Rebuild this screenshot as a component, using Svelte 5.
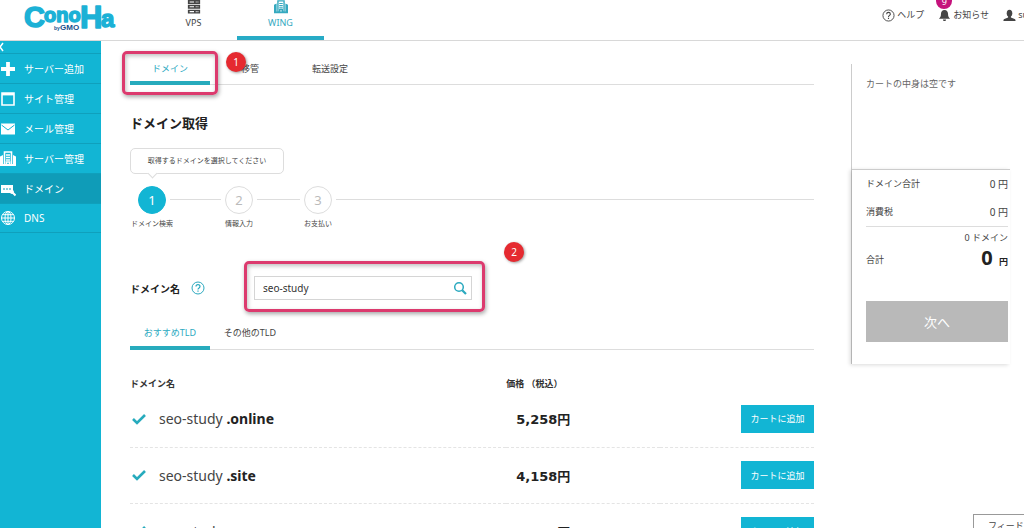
<script>
  let keyword = $state('seo-study')
  let activeTab = $state('ドメイン')
  let activeTld = $state('おすすめTLD')

  const menu = [
    { icon: 'plus', label: 'サーバー追加' },
    { icon: 'site', label: 'サイト管理' },
    { icon: 'mail', label: 'メール管理' },
    { icon: 'server', label: 'サーバー管理' },
    { icon: 'domain', label: 'ドメイン', active: true },
    { icon: 'globe', label: 'DNS' },
  ]

  const tabs = ['ドメイン', '移管', '転送設定']
  const tldTabs = ['おすすめTLD', 'その他のTLD']

  const domains = [
    { tld: '.online', price: '5,258' },
    { tld: '.site', price: '4,158' },
    { tld: '.space', price: '3,278' },
  ]
</script>

{#snippet building()}
  <path d="M4.500 1h7v13h-2v-3h-3v3h-2z" fill="none" stroke="currentColor" stroke-width="1.600" />
  <path d="M6 4h4M6 6.500h4M6 9h4" stroke="currentColor" stroke-width="1.400" />
  <path d="M0 5.500 3 4v11H0zM13 4l3 1.500V15h-3zM2 13h12v2H2z" fill="currentColor" />
{/snippet}

<div class="page">
  <header class="header">
    <a href="/" class="logo" aria-label="ConoHa by GMO">
      <svg viewBox="0 0 94 34">
        <g class="logo-name">
          <text x="0" y="25" font-size="29">C</text>
          <text x="20" y="20" font-size="20">ono</text>
          <text x="56" y="26" font-size="31">H</text>
          <text x="77" y="25" font-size="24">a</text>
        </g>
        <text class="logo-by" x="30" y="28" font-size="5">by</text>
        <text class="logo-gmo" x="36" y="28" font-size="8">GMO</text>
      </svg>
    </a>
    <nav class="products">
      <a href="/vps" class="product">
        <svg viewBox="0 0 14 16">
          <path d="M0 0h14v4.500H0zM0 5.500h14V10H0zM0 11h14v4.500H0z" fill="currentColor" />
          <path d="M2 2.300h5M9 2.300h1M11 2.300h1M2 7.800h5M9 7.800h1M11 7.800h1M2 13.300h5M9 13.300h1M11 13.300h1" stroke="#fff" stroke-width="1.200" />
        </svg>
        VPS
      </a>
      <a href="/wing" class="product active">
        <svg viewBox="0 0 16 16">{@render building()}</svg>
        WING
      </a>
    </nav>
    <div class="account">
      <a href="/help">
        <svg viewBox="0 0 14 14" fill="none" stroke="currentColor">
          <circle cx="7" cy="7" r="6" />
          <path d="M5 5.600c0-2.600 4-2.600 4 0C9 7 7 6.800 7 8.500M7 9.500v1.300" stroke-width="1.200" />
        </svg>
        ヘルプ
      </a>
      <a href="/news" class="news">
        <svg viewBox="0 0 14 14" fill="currentColor">
          <path d="M7 1c-2.600 0-3.800 2-3.800 4.200 0 2.800-.7 3.900-2.200 5.300h12c-1.500-1.400-2.200-2.500-2.200-5.300C10.800 3 9.600 1 7 1zM5.300 11.300h3.400c0 2.200-3.400 2.200-3.400 0z" />
        </svg>
        <span class="count">9</span>
        お知らせ
      </a>
      <a href="/account">
        <svg viewBox="0 0 14 14" fill="currentColor">
          <ellipse cx="7" cy="4.500" rx="3" ry="3.800" />
          <path d="M5.500 7h3v2.200l4 1.500c.8.300 1 .9 1 2.300H.5c0-1.400.2-2 1-2.300l4-1.500z" />
        </svg>
        su
      </a>
    </div>
  </header>

  <div class="body">
    <nav class="sidebar">
      <button class="collapse" aria-label="閉じる">
        <svg viewBox="0 0 6 10"><path d="M3 1 0 5l3 4" fill="none" stroke="currentColor" stroke-width="1.500" /></svg>
      </button>
      {#each menu as item}
        <a href="/" class="menu-item" class:active={item.active}>
          <svg viewBox="0 0 16 16">
            {#if item.icon === 'plus'}
              <path d="M8 1v14M1 8h14" stroke="currentColor" stroke-width="3.800" />
            {:else if item.icon === 'site'}
              <path d="M2 2h12v12H2z" fill="none" stroke="currentColor" stroke-width="1.600" />
              <path d="M2 3.200h12" stroke="currentColor" stroke-width="2.400" />
            {:else if item.icon === 'mail'}
              <path d="M1 2.500h14v11H1z" fill="currentColor" />
              <path d="m1.500 4 6.500 5 6.500-5" fill="none" stroke="#12b5d4" />
            {:else if item.icon === 'server'}
              {@render building()}
            {:else if item.icon === 'domain'}
              <path d="M1 4h12v8H1z" fill="currentColor" />
              <path d="M3 8h8" stroke="#0f9cb8" stroke-dasharray="2 1" />
              <circle cx="12" cy="11" r="2" fill="currentColor" />
              <path d="m12 11 3.500 3.500" stroke="currentColor" stroke-width="2" />
            {:else}
              <g fill="none" stroke="currentColor">
                <circle cx="8" cy="8" r="6.500" />
                <ellipse cx="8" cy="8" rx="3" ry="6.500" />
                <path d="M8 1.500v13M1.500 8h13M2.500 4.700h11M2.500 11.300h11" />
              </g>
            {/if}
          </svg>
          {item.label}
        </a>
      {/each}
    </nav>

    <main class="main">
      <div class="tabs">
        {#each tabs as tab}
          <button class="tab" class:active={activeTab === tab} onclick={() => (activeTab = tab)}>{tab}</button>
        {/each}
        <div class="frame frame-tab"></div>
        <span class="marker marker-tab">1</span>
      </div>

      <h1>ドメイン取得</h1>

      <p class="balloon">取得するドメインを選択してください</p>
      <div class="steps">
        <div class="step active"><span class="circle">1</span><span class="step-label">ドメイン検索</span></div>
        <div class="line"></div>
        <div class="step"><span class="circle">2</span><span class="step-label">情報入力</span></div>
        <div class="line"></div>
        <div class="step"><span class="circle">3</span><span class="step-label">お支払い</span></div>
        <div class="line"></div>
      </div>

      <form class="search" onsubmit={(e) => e.preventDefault()}>
        <label for="keyword">ドメイン名</label>
        <svg class="hint" viewBox="0 0 14 14" fill="none" stroke="currentColor">
          <circle cx="7" cy="7" r="6" />
          <path d="M5 5.600c0-2.600 4-2.600 4 0C9 7 7 6.800 7 8.500M7 9.500v1.300" stroke-width="1.200" />
        </svg>
        <div class="field">
          <input id="keyword" type="text" bind:value={keyword} />
          <button class="search-btn" aria-label="検索">
            <svg viewBox="0 0 14 14" fill="none" stroke="currentColor">
              <circle cx="6" cy="6" r="4.300" stroke-width="1.500" />
              <path d="m9.200 9.200 3.800 3.800" stroke-width="2.200" />
            </svg>
          </button>
          <div class="frame frame-field"></div>
          <span class="marker marker-field">2</span>
        </div>
      </form>

      <div class="tabs tld-tabs">
        {#each tldTabs as tab}
          <button class="tab" class:active={activeTld === tab} onclick={() => (activeTld = tab)}>{tab}</button>
        {/each}
      </div>

      <table class="domains">
        <thead>
          <tr>
            <th class="col-name">ドメイン名</th>
            <th>価格 （税込）</th>
            <th></th>
          </tr>
        </thead>
        <tbody>
          {#each domains as domain}
            <tr>
              <td>
                <div class="name">
                  <svg viewBox="0 0 14 12"><path d="m1 6 4 4 8-8" fill="none" stroke="currentColor" stroke-width="2.600" /></svg>
                  <span>seo-study <b>{domain.tld}</b></span>
                </div>
              </td>
              <td class="price">{domain.price}円</td>
              <td class="action"><button class="add-btn">カートに追加</button></td>
            </tr>
          {/each}
        </tbody>
      </table>
    </main>

    <aside class="cart">
      <p class="empty">カートの中身は空です</p>
      <div class="summary">
        <div class="row"><span>ドメイン合計</span><span class="value">0 円</span></div>
        <div class="row"><span>消費税</span><span class="value">0 円</span></div>
        <div class="total">
          <p class="quantity">0 ドメイン</p>
          <div class="sum"><span>合計</span><strong><span class="amount">0</span> 円</strong></div>
        </div>
        <button class="next-btn">次へ</button>
      </div>
    </aside>
  </div>

  <button class="feedback">フィード</button>
</div>

<style>
  :global(body) {
    background: #fff;
  }

  .page {
    position: relative;
    display: flex;
    flex-direction: column;
    height: 100vh;
    overflow: hidden;
    font-family: "Noto Sans", "Noto Sans CJK JP", sans-serif;
    font-size: 9px;
    color: #444;
  }

  .page * {
    box-sizing: border-box;
  }

  a {
    color: inherit;
    text-decoration: none;
  }

  button {
    padding: 0;
    border: none;
    background: none;
    font: inherit;
    color: inherit;
    cursor: pointer;
  }

  p,
  h1 {
    margin: 0;
  }

  .header {
    display: flex;
    flex-shrink: 0;
    height: 41px;
    border-bottom: 1px solid #d8d8d8;
  }

  .logo {
    width: 150px;
    padding: 2px 0 0 24px;
  }

  .logo svg {
    display: block;
    width: 94px;
    height: 34px;
    overflow: visible;
  }

  .logo-name {
    font-family: "Liberation Sans", sans-serif;
    font-weight: 700;
    fill: #1cb1d6;
    stroke: #1cb1d6;
    stroke-width: 1.5px;
    stroke-linejoin: round;
  }

  .logo-by,
  .logo-gmo {
    font-family: "Liberation Sans", sans-serif;
    font-weight: 700;
    fill: #164f8c;
  }

  .products {
    display: flex;
  }

  .product {
    display: flex;
    flex-direction: column;
    align-items: center;
    gap: 2px;
    width: 87px;
    height: 40px;
    line-height: 14px;
    border-bottom: 4px solid transparent;
  }

  .product.active {
    color: #35a9bf;
    border-bottom-color: #27abc6;
  }

  .product svg {
    width: 14px;
    height: 14px;
  }

  .account {
    display: flex;
    gap: 14px;
    margin-right: -4px;
    margin-left: auto;
    line-height: 30px;
    white-space: nowrap;
  }

  .account a {
    display: flex;
    align-items: center;
    gap: 2px;
    height: 30px;
  }

  .account svg {
    width: 13px;
    height: 13px;
  }

  .news {
    position: relative;
  }

  .count {
    position: absolute;
    top: -7px;
    left: -2px;
    width: 16px;
    height: 16px;
    border-radius: 50%;
    background: #c5127c;
    color: #fff;
    line-height: 18px;
    text-align: center;
  }

  .body {
    display: flex;
    flex: 1;
    min-height: 0;
  }

  .sidebar {
    flex: 0 0 101px;
    background: #12b5d4;
    color: #fff;
  }

  .collapse {
    display: flex;
    align-items: center;
    width: 100%;
    height: 12px;
  }

  .collapse svg {
    width: 6px;
    height: 10px;
  }

  .menu-item {
    display: flex;
    align-items: center;
    gap: 8px;
    height: 30px;
    border-top: 1px solid #0fa0bc;
    font-size: 10px;
  }

  .menu-item:last-child {
    border-bottom: 1px solid #0fa0bc;
  }

  .menu-item.active {
    background: #0f9cb8;
  }

  .menu-item svg {
    width: 16px;
    height: 16px;
  }

  .main {
    flex: 1;
    padding: 14px 37px 0 29px;
  }

  .tabs {
    position: relative;
    display: flex;
    height: 30px;
    border-bottom: 1px solid #ddd;
  }

  .tab {
    width: 80px;
    height: 30px;
    border-bottom: 4px solid transparent;
  }

  .tab.active {
    color: #2ba9bf;
    border-bottom-color: #27abbd;
  }

  .frame {
    position: absolute;
    border: 3px solid #dc3a6e;
    border-radius: 5px;
    box-shadow: 1px 2px 4px rgba(0, 0, 0, 0.35), inset 1px 2px 4px rgba(0, 0, 0, 0.25);
    pointer-events: none;
  }

  .frame-tab {
    top: -4px;
    left: -8px;
    width: 96px;
    height: 44px;
  }

  .marker {
    position: absolute;
    width: 20px;
    height: 20px;
    border-radius: 50%;
    background: #e52a30;
    box-shadow: 1px 1px 3px rgba(0, 0, 0, 0.4);
    color: #fff;
    font-size: 10px;
    line-height: 20px;
    text-align: center;
  }

  .marker-tab {
    top: -3px;
    left: 96px;
  }

  h1 {
    margin-top: 28px;
    font-size: 13px;
    line-height: 20px;
    color: #222;
  }

  .balloon {
    position: relative;
    width: 154px;
    height: 26px;
    margin-top: 15px;
    border: 1px solid #ddd;
    border-radius: 5px;
    font-size: 7px;
    line-height: 24px;
    text-align: center;
  }

  .balloon::after {
    content: "";
    position: absolute;
    bottom: -4px;
    left: 18px;
    width: 6px;
    height: 6px;
    border: solid #ddd;
    border-width: 0 1px 1px 0;
    background: #fff;
    transform: rotate(45deg);
  }

  .steps {
    display: grid;
    grid-template-columns: 28px 51px 28px 43px 28px 1fr;
    gap: 4px;
    margin-top: 12px;
    padding-left: 8px;
  }

  .step {
    display: flex;
    flex-direction: column;
    align-items: center;
    gap: 4px;
  }

  .circle {
    width: 28px;
    height: 28px;
    border: 1px solid #ddd;
    border-radius: 50%;
    font-size: 13px;
    line-height: 26px;
    text-align: center;
    color: #bbb;
  }

  .step.active .circle {
    border-color: #12b5d4;
    background: #12b5d4;
    color: #fff;
  }

  .step-label {
    font-size: 7px;
    line-height: 12px;
    white-space: nowrap;
  }

  .line {
    height: 14px;
    border-bottom: 1px solid #ddd;
  }

  .search {
    display: flex;
    align-items: center;
    margin-top: 46px;
  }

  .search label {
    width: 61px;
    font-size: 10px;
    font-weight: 700;
    color: #222;
  }

  .hint {
    width: 14px;
    height: 14px;
    margin-right: 49px;
    color: #2ba9bf;
  }

  .field {
    position: relative;
    display: flex;
    width: 218px;
    height: 24px;
    border: 1px solid #d5d5d5;
  }

  .field input {
    flex: 1;
    min-width: 0;
    padding: 0 8px;
    border: none;
    outline: none;
    background: none;
    font: inherit;
    font-size: 10px;
    color: #333;
  }

  .search-btn {
    width: 18px;
    color: #2ba9bf;
  }

  .search-btn svg {
    display: block;
    width: 14px;
    height: 14px;
  }

  .frame-field {
    top: -16px;
    left: -11px;
    width: 241px;
    height: 51px;
  }

  .marker-field {
    top: -35px;
    left: 249px;
  }

  .tld-tabs {
    height: 32px;
    margin-top: 18px;
  }

  .tld-tabs .tab {
    height: 32px;
  }

  .domains {
    width: 100%;
    margin-top: 27px;
    border-collapse: collapse;
    table-layout: fixed;
  }

  .domains th {
    height: 14px;
    padding: 0;
    line-height: 14px;
    text-align: left;
    color: #333;
  }

  .domains .col-name {
    width: 55%;
  }

  .domains td {
    height: 56px;
    padding: 0;
    border-bottom: 1px dashed #e4e4e4;
  }

  .name {
    display: flex;
    align-items: center;
    gap: 13px;
    padding-left: 2px;
    font-size: 14px;
    white-space: nowrap;
  }

  .name svg {
    width: 14px;
    height: 12px;
    color: #27abbd;
  }

  .name b {
    color: #222;
  }

  .domains .price {
    padding-left: 10px;
    font-family: "DejaVu Sans", "Noto Sans CJK JP", sans-serif;
    font-size: 13px;
    font-weight: 700;
    color: #222;
  }

  .action {
    text-align: right;
  }

  .add-btn {
    width: 73px;
    height: 28px;
    background: #12b5d4;
    color: #fff;
  }

  .cart {
    flex: 0 0 159px;
    align-self: flex-start;
    margin: 23px 14px 0 0;
    border-left: 1px solid #ccc;
  }

  .empty {
    height: 105px;
    padding: 10px 14px;
    line-height: 20px;
    color: #666;
  }

  .summary {
    padding: 0 2px 22px 14px;
    border-top: 1px solid #ccc;
    box-shadow: -2px 1px 4px rgba(0, 0, 0, 0.15);
  }

  .row {
    display: flex;
    justify-content: space-between;
    height: 28px;
    line-height: 28px;
  }

  .value {
    font-size: 10px;
  }

  .total {
    margin-bottom: 30px;
    border-top: 1px solid #ddd;
  }

  .quantity {
    line-height: 22px;
    text-align: right;
  }

  .sum {
    display: flex;
    align-items: center;
    justify-content: space-between;
    height: 22px;
    line-height: 22px;
  }

  .sum strong {
    color: #222;
  }

  .amount {
    margin-right: 4px;
    font-size: 20px;
  }

  .next-btn {
    width: 100%;
    height: 41px;
    background: #b9b9b9;
    color: #fff;
    font-size: 13px;
  }

  .feedback {
    position: absolute;
    right: 0;
    bottom: 0;
    width: 51px;
    height: 14px;
    padding-left: 14px;
    border: solid #999;
    border-width: 1px 0 0 1px;
    background: #fff;
    line-height: 22px;
    text-align: left;
    white-space: nowrap;
    overflow: hidden;
  }
</style>
